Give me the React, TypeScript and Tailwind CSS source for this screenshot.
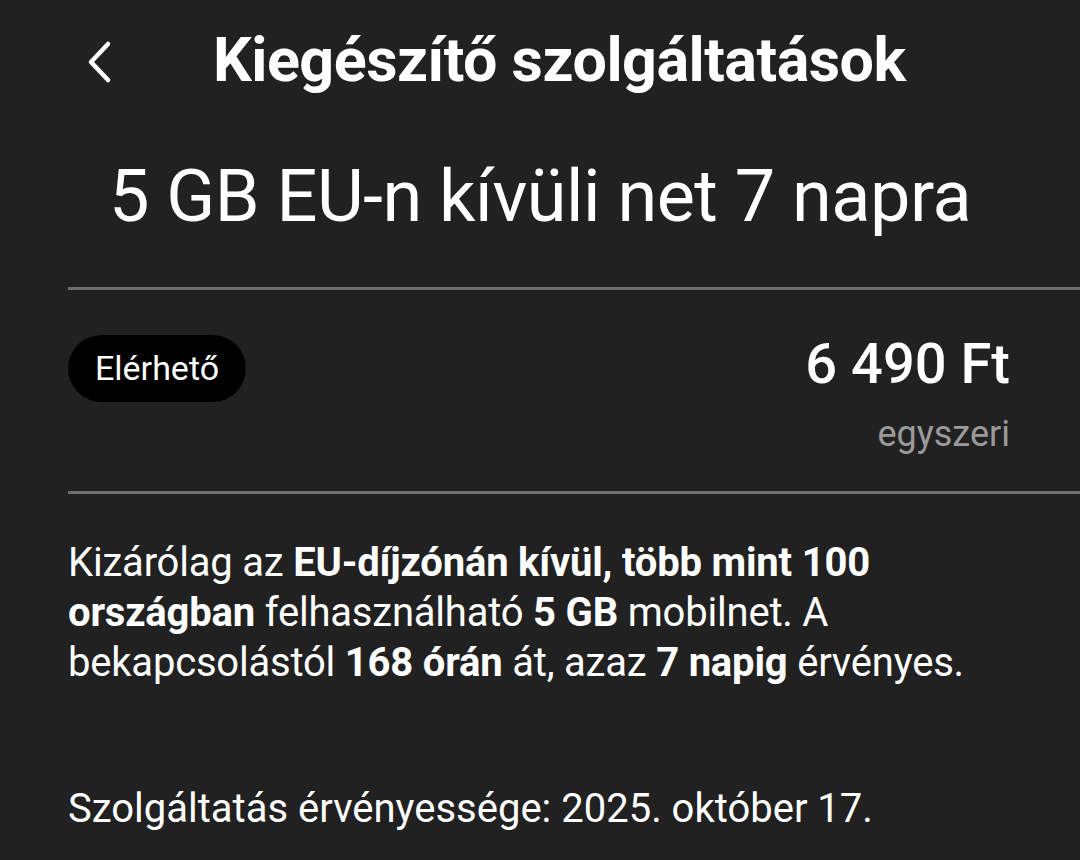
import React from 'react';

// Add-on service detail screen (dark theme)
const BackIcon: React.FC = () => (
  <svg width="30" height="44" viewBox="0 0 30 44" fill="none">
    <path d="M24 4 L7 22 L24 40" stroke="white" strokeWidth="4.5" strokeLinecap="round" strokeLinejoin="round" />
  </svg>
);

export default function App() {
  return (
    <div
      className="w-[1080px] h-[860px] overflow-hidden bg-[#212121] text-white"
      style={{ fontFamily: 'Roboto, "Noto Sans", sans-serif' }}
    >
      {/* header */}
      <div className="flex items-center h-[124px] pl-[84px]">
        <BackIcon />
        <h1 className="ml-[99px] text-[61px] font-bold leading-none tracking-[-0.5px] -mt-[4px]">
          Kiegészítő szolgáltatások
        </h1>
      </div>

      <h2 className="text-center text-[72px] leading-none mt-[37px] tracking-[-0.5px]">
        5 GB EU-n kívüli net 7 napra
      </h2>

      <div className="ml-[68px] mt-[54px] h-[3px] bg-[#6e6e6e]" />

      {/* status + price */}
      <div className="flex justify-between pl-[68px] pr-[70px] pt-[45px] h-[201px]">
        <div className="h-[67px] px-[27px] rounded-full bg-black flex items-center text-[34px]">
          Elérhető
        </div>
        <div className="flex flex-col items-end">
          <div className="text-[56px] font-medium leading-none mt-[1px]">6 490 Ft</div>
          <div className="text-[36px] text-[#9a9a9a] mt-[24px] leading-none">egyszeri</div>
        </div>
      </div>

      <div className="ml-[68px] h-[3px] bg-[#6e6e6e]" />

      <p className="px-[68px] pt-[44px] text-[40px] leading-[50px] tracking-[-0.2px]">
        Kizárólag az <b>EU-díjzónán kívül, több mint 100</b>
        <br />
        <b>országban</b> felhasználható <b>5 GB</b> mobilnet. A
        <br />
        bekapcsolástól <b>168 órán</b> át, azaz <b>7 napig</b> érvényes.
      </p>

      <p className="px-[68px] mt-[96px] text-[40px] leading-[50px]">
        Szolgáltatás érvényessége: 2025. október 17.
      </p>
    </div>
  );
}
